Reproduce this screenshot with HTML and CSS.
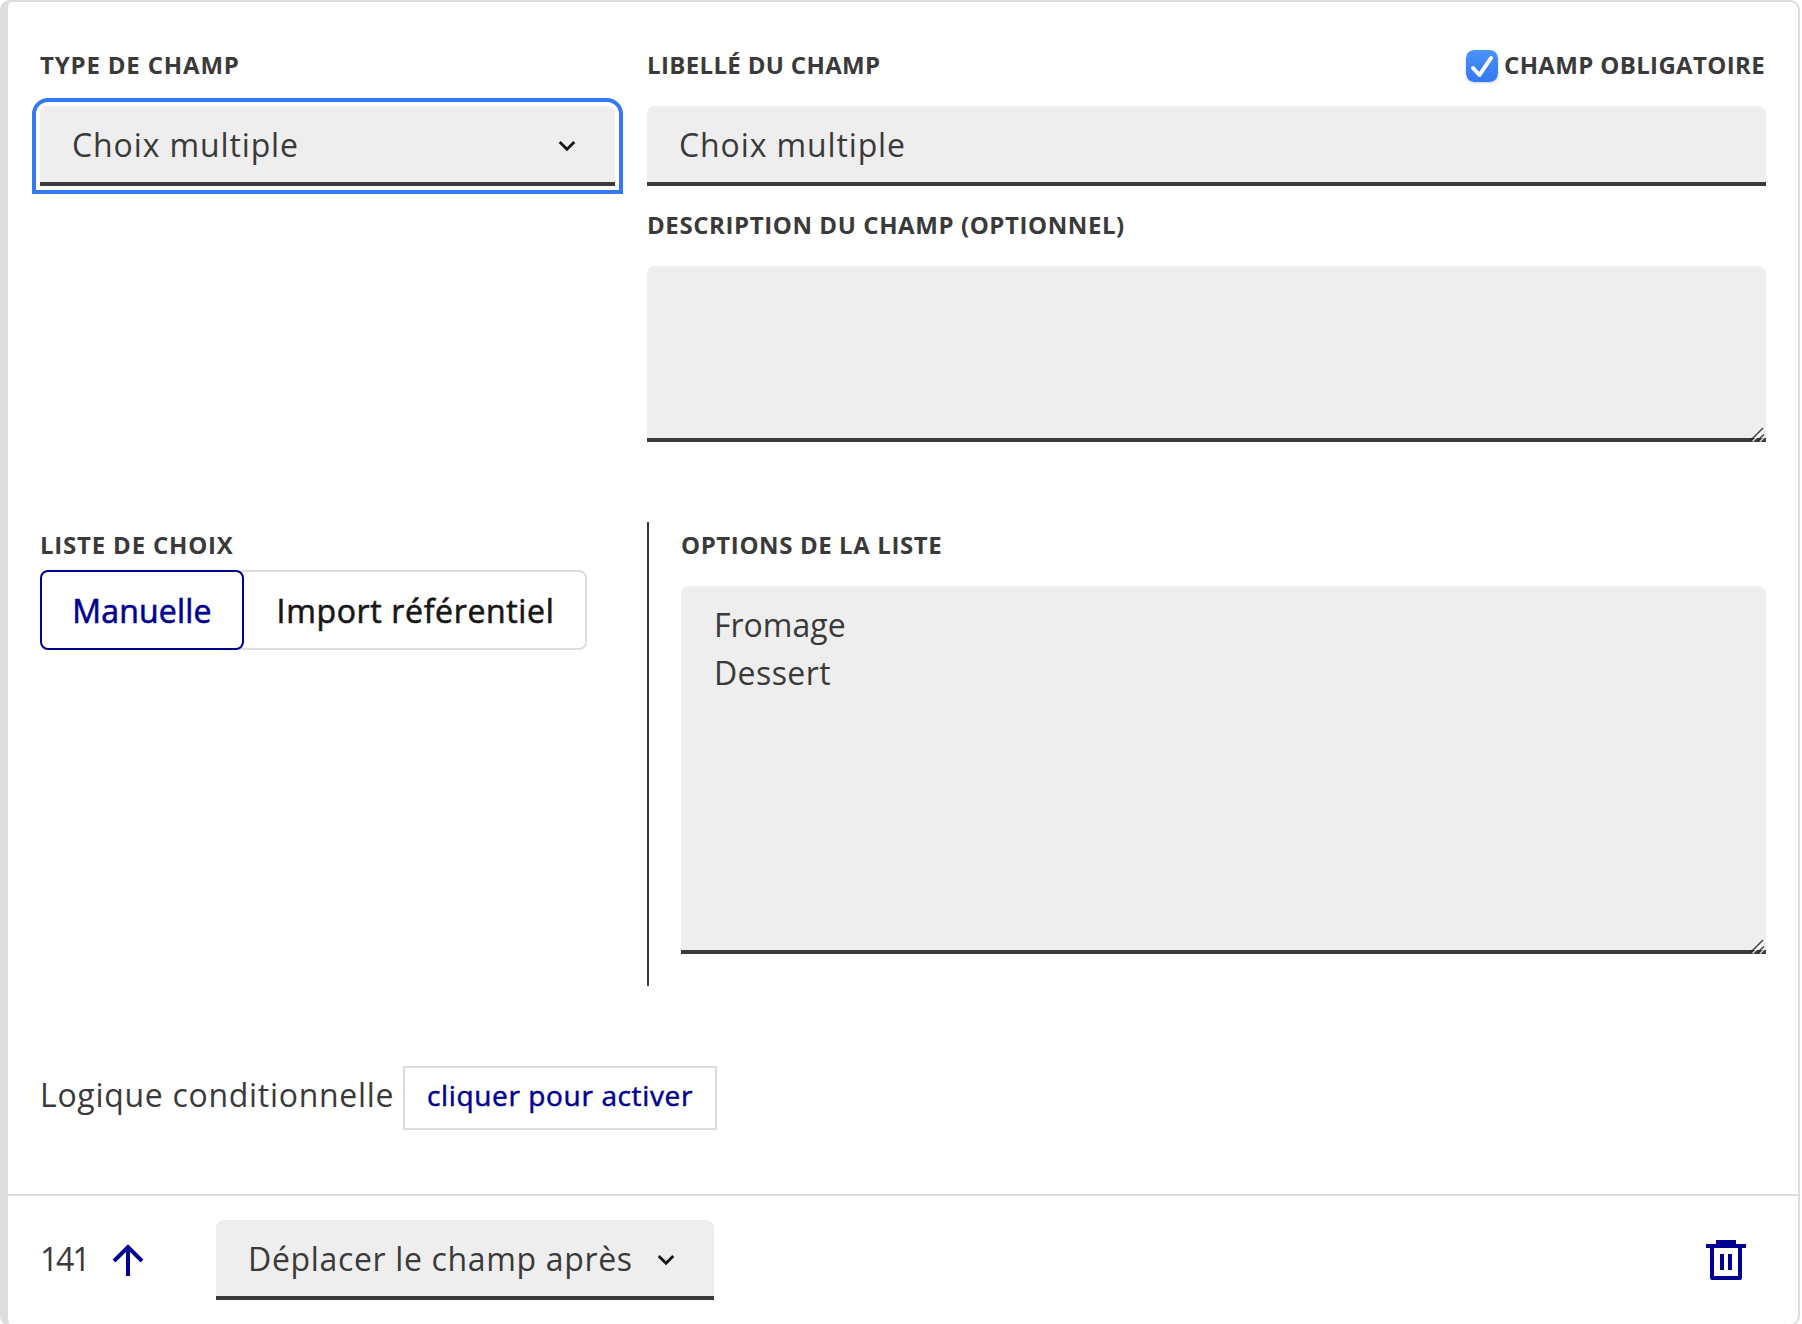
FILE: index.html
```html
<!DOCTYPE html>
<html lang="fr">
<head>
<meta charset="utf-8">
<title>Éditeur de champ</title>
<link rel="stylesheet" href="styles.css">
</head>
<body>
<main class="card">
  <section class="row">
    <div class="col">
      <div class="label label-type">Type de champ</div>
      <div class="field select focused"><span class="choix">Choix multiple</span>
        <svg class="chevron" width="18" height="12" viewBox="0 0 18 12"><path d="M1.7 2 9 9.3 16.3 2" fill="none" stroke="#161616" stroke-width="2.8"/></svg>
      </div>
    </div>
    <div class="col">
      <div class="label-line">
        <div class="label label-libelle">Libellé du champ</div>
        <label class="mandatory">
          <svg class="check" width="32" height="32" viewBox="0 0 32 32"><defs><linearGradient id="blue" x1="0" y1="0" x2="0" y2="1"><stop offset="0" stop-color="#4b92f8"/><stop offset="1" stop-color="#3377f5"/></linearGradient></defs><rect width="32" height="32" rx="8" fill="url(#blue)"/><path d="M7 18 13.5 25 25 8" fill="none" stroke="#fff" stroke-width="4" stroke-linecap="round" stroke-linejoin="round"/></svg>
          <span class="label label-libelle">Champ obligatoire</span>
        </label>
      </div>
      <div class="field"><span class="choix">Choix multiple</span></div>
      <div class="label label-desc">Description du champ (optionnel)</div>
      <div class="field area">
        <svg class="grip" width="16" height="16" viewBox="0 0 16 16"><path d="M2.5 15.5 14.5 3.5M10 15.5l4.5-4.5" stroke="#fff" stroke-opacity=".75" stroke-width="1.6"/><path d="M1 14 13 2M7.5 14.5 14 8.500" stroke="#222" stroke-opacity=".8" stroke-width="1.6"/></svg>
      </div>
    </div>
  </section>

  <section class="row list-row">
    <div class="col list-kind">
      <div class="label label-liste">Liste de choix</div>
      <div class="segmented">
        <button class="segment active">Manuelle</button>
        <button class="segment import">Import référentiel</button>
      </div>
    </div>
    <div class="col options">
      <div class="label label-options">Options de la liste</div>
      <div class="field area tall"><span>Fromage</span><span class="dessert">Dessert</span>
        <svg class="grip" width="16" height="16" viewBox="0 0 16 16"><path d="M2.5 15.5 14.5 3.5M10 15.5l4.5-4.5" stroke="#fff" stroke-opacity=".75" stroke-width="1.6"/><path d="M1 14 13 2M7.5 14.5 14 8.500" stroke="#222" stroke-opacity=".8" stroke-width="1.6"/></svg>
      </div>
    </div>
  </section>

  <section class="logic">
    <span class="logic-text">Logique conditionnelle</span>
    <button class="activate">cliquer pour activer</button>
  </section>

  <footer class="footer">
    <span class="number">141</span>
    <svg class="arrow" width="32" height="32" viewBox="0 0 32 32"><path d="M16 32V3M2 17 16 3l14 14" fill="none" stroke="#000091" stroke-width="4"/></svg>
    <div class="field select move"><span class="move-text">Déplacer le champ après</span>
      <svg class="chevron" width="18" height="12" viewBox="0 0 18 12"><path d="M1.7 2 9 9.3 16.3 2" fill="none" stroke="#161616" stroke-width="2.8"/></svg>
    </div>
    <svg class="trash" width="40" height="40" viewBox="0 0 40 40"><path fill="#000091" fill-rule="evenodd" d="M10 0h20v4h10v4h-4v30a2 2 0 0 1-2 2H6a2 2 0 0 1-2-2V8H0V4h10zM8 8v28h24V8zM14 14h4v16h-4zM22 14h4v16h-4z"/></svg>
  </footer>
</main>
</body>
</html>
```

FILE: styles.css
```css
* { box-sizing: border-box; }
html { overflow: hidden; }
body {
  margin: 0;
  background: #fff;
  color: #3a3a3a;
  font: 400 32px/48px "Open Sans", sans-serif;
}
svg { display: block; flex: none; }
button { font: inherit; background: #fff; white-space: nowrap; }

.card {
  width: 1800px;
  height: 1326px;
  border: 2px solid #ddd;
  border-left-width: 8px;
  border-radius: 10px;
}
.row {
  display: grid;
  grid-template-columns: 575px 1119px;
  column-gap: 32px;
  padding: 43px 32px 0;
}
.col { display: flex; flex-direction: column; min-width: 0; }

.label {
  font-size: 24px;
  font-weight: 700;
  line-height: 40px;
  text-transform: uppercase;
  white-space: nowrap;
  margin-bottom: 21px;
}
.label-type { letter-spacing: .83px; }
.label-libelle { letter-spacing: .35px; }
.label-desc { letter-spacing: .59px; margin-top: 19px; }
.label-liste { letter-spacing: .8px; margin-bottom: 5px; }
.label-options { letter-spacing: .6px; }
.label-line { display: flex; justify-content: space-between; }
.mandatory { display: flex; gap: 6px; margin-right: 1px; }
.check { margin-top: 5px; border-radius: 8px; box-shadow: 0 1px 3px rgba(51, 119, 245, .3); }

.field {
  position: relative;
  height: 80px;
  padding: 15px 32px 0;
  background: #eee;
  border-radius: 8px 8px 0 0;
  box-shadow: inset 0 -4px 0 #3a3a3a;
  white-space: nowrap;
}
.choix { letter-spacing: .88px; }
.select { display: flex; }
.select .chevron { margin: 19px 7px 0 auto; }
.focused { outline: 4px solid #3478f6; outline-offset: 4px; }
.area { display: flex; flex-direction: column; height: 176px; }
.tall { height: 368px; padding-left: 33px; }
.dessert { letter-spacing: .4px; }
.grip { position: absolute; right: 0; bottom: 0; }

.list-row { padding-top: 80px; }
.list-kind { padding-top: 3px; }
.options { border-left: 2px solid #3a3a3a; padding: 3px 0 32px 32px; }
.segmented { display: flex; }
.segment {
  height: 80px;
  padding: 2px 0 0;
  border: 2px solid #ddd;
  border-radius: 8px;
  color: #161616;
  -webkit-text-stroke: .6px currentColor;
}
.segment.active {
  width: 204px;
  border-color: #000091;
  color: #000091;
  letter-spacing: .2px;
  z-index: 1;
}
.segment.import {
  width: 351px;
  margin-left: -8px;
  padding-left: 8px;
  letter-spacing: .65px;
}

.logic { display: flex; gap: 8px; padding: 80px 32px 64px; }
.logic-text { width: 355px; padding-top: 5px; letter-spacing: .7px; white-space: nowrap; }
.activate {
  width: 314px;
  height: 64px;
  padding: 0 0 6px;
  border: 2px solid #ddd;
  color: #000091;
  font-size: 28px;
  letter-spacing: .63px;
  -webkit-text-stroke: .5px currentColor;
}

.footer { display: flex; border-top: 2px solid #ddd; padding: 24px 52px 0 32px; }
.number { width: 72px; padding-top: 15px; letter-spacing: -2.2px; }
.arrow { margin-top: 24px; }
.move { width: 498px; margin-left: 72px; }
.move-text { letter-spacing: .66px; }
.trash { margin: 20px 0 0 auto; }
```
